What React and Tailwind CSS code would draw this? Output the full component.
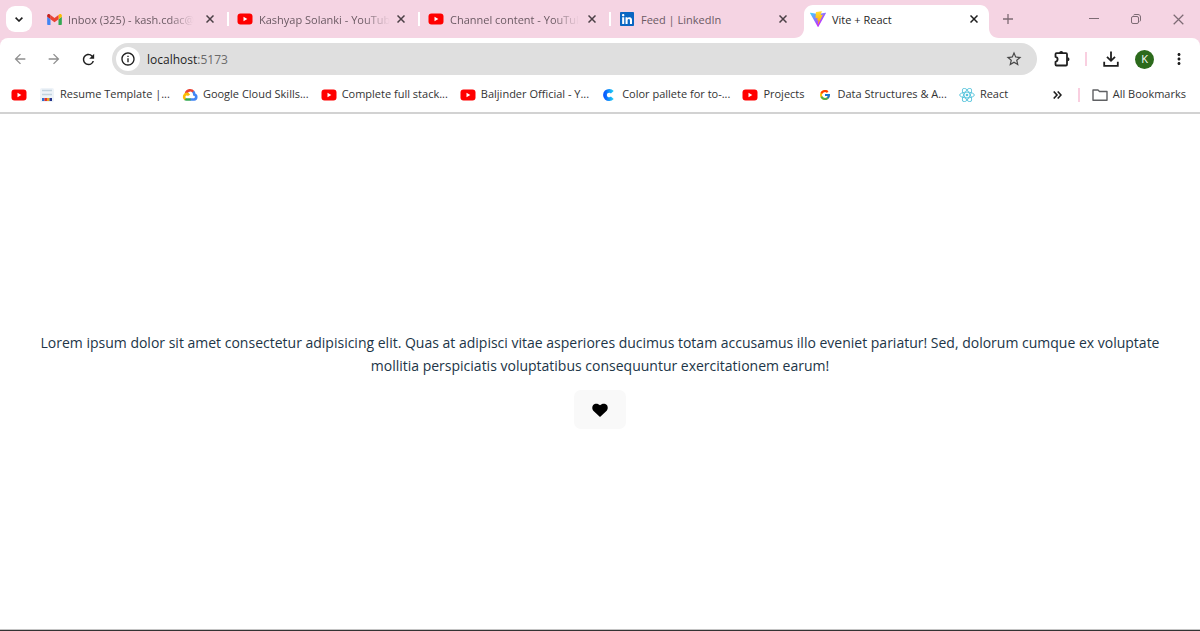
import React, { useState } from 'react';
import { FaLinkedin } from 'react-icons/fa';
import { FcGoogle } from 'react-icons/fc';
import { MdArrowBack, MdArrowForward, MdRefresh, MdOutlineInfo, MdStarBorder, MdMoreVert } from 'react-icons/md';

// --- LOGOS ---
const GmailLogo = () => (
    <svg viewBox="52 42 88 66" className="w-[15px] h-[11px]">
        <path fill="#4285f4" d="M58 108h14V74L52 59v43c0 3.3 2.7 6 6 6" />
        <path fill="#34a853" d="M120 108h14c3.300 0 6-2.700 6-6V59l-20 15" />
        <path fill="#fbbc04" d="M120 48v26l20-15v-8c0-7.400-8.500-11.600-14.400-7.200" />
        <path fill="#ea4335" d="M72 74V48l24 18 24-18v26L96 92" />
        <path fill="#c5221f" d="M52 51v8l20 15V48l-5.600-4.200c-6-4.400-14.400-.2-14.400 7.200" />
    </svg>
);

const YouTubeLogo = () => (
    <svg viewBox="0 0 16 12" className="w-4 h-3">
        <rect x="0.5" y="0.5" width="15" height="11" rx="3" fill="#ff0000" />
        <path d="M6.500 3.800v4.400L10.300 6z" fill="#fff" />
    </svg>
);

const LinkedInLogo = () => (
    <svg viewBox="0 0 16 16" className="w-4 h-4">
        <rect x="2" y="2" width="12" height="12" fill="#fff" />
        <FaLinkedin size={16} color="#0a66c2" />
    </svg>
);

const ViteLogo = () => (
    <svg viewBox="0 0 256 257" className="w-4 h-4">
        <defs>
            <linearGradient id="viteBody" x1="-.828%" x2="57.636%" y1="7.652%" y2="78.411%">
                <stop offset="0%" stopColor="#41D1FF" />
                <stop offset="100%" stopColor="#BD34FE" />
            </linearGradient>
            <linearGradient id="viteBolt" x1="43.376%" x2="50.316%" y1="2.242%" y2="89.030%">
                <stop offset="0%" stopColor="#FFEA83" />
                <stop offset="8.333%" stopColor="#FFDD35" />
                <stop offset="100%" stopColor="#FFA800" />
            </linearGradient>
        </defs>
        <path fill="url(#viteBody)" d="M255.153 37.938L134.897 252.976c-2.483 4.440-8.862 4.466-11.382.048L.875 37.958c-2.746-4.814 1.371-10.646 6.827-9.670l120.385 21.517a6.537 6.537 0 0 0 2.322-.004l117.867-21.483c5.438-.991 9.574 4.796 6.877 9.620Z" />
        <path fill="url(#viteBolt)" d="M185.432.063L96.440 17.501a3.268 3.268 0 0 0-2.634 3.014l-5.474 92.456a3.268 3.268 0 0 0 3.997 3.378l24.777-5.718c2.318-.535 4.413 1.507 3.936 3.838l-7.361 36.047c-.495 2.426 1.782 4.500 4.151 3.780l15.304-4.649c2.372-.720 4.652 1.360 4.150 3.788l-11.698 56.621c-.732 3.542 3.979 5.473 5.943 2.437l1.313-2.028l72.516-144.720c1.215-2.423-.880-5.186-3.540-4.672l-25.505 4.922c-2.396.462-4.435-1.770-3.759-4.114l16.646-57.705c.677-2.350-1.370-4.583-3.769-4.113Z" />
    </svg>
);

const ResumeLogo = () => (
    <svg viewBox="0 0 16 16" className="w-4 h-4">
        <rect x="1" y="1" width="14" height="14" rx="2" fill="#eef3f8" />
        <path d="M3 3.500h10M3 7.500h10" stroke="#c3d3de" strokeWidth="1.500" />
        <rect x="3" y="11" width="2.500" height="3" fill="#2f6fd0" />
        <rect x="5.500" y="11" width="2.500" height="3" fill="#e03131" />
        <rect x="8" y="11" width="2.500" height="3" fill="#f2a51f" />
        <rect x="10.500" y="11" width="2.500" height="3" fill="#26358c" />
    </svg>
);

const CloudLogo = () => (
    <svg viewBox="0 0 16 16" className="w-4 h-4" fill="none" strokeWidth="2.600">
        <path d="M4 6.200A4.300 4.300 0 0 1 11.500 5" stroke="#ea4335" />
        <path d="M11.200 4.600A4.300 4.300 0 0 1 12.300 7.400A2.600 2.600 0 0 1 12 12.500H8" stroke="#4285f4" />
        <path d="M8.500 12.500H4.600A3 3 0 0 1 2.600 11.800" stroke="#34a853" />
        <path d="M3.200 12.200A3 3 0 0 1 4.600 6.900A3 3 0 0 1 7 8.400" stroke="#fbbc04" />
    </svg>
);

const CoolorsLogo = () => (
    <svg viewBox="0 0 16 16" className="w-4 h-4">
        <defs>
            <linearGradient id="ring" x1="0" x2="1" y1="0" y2="0">
                <stop offset="0%" stopColor="#0a5cff" />
                <stop offset="100%" stopColor="#1cc4f5" />
            </linearGradient>
        </defs>
        <path d="M11.300 5.200A4.200 4.200 0 1 0 11.300 10.800" stroke="url(#ring)" strokeWidth="3.800" fill="none" />
    </svg>
);

const ReactLogo = () => (
    <svg viewBox="-12 -12 24 24" className="w-4 h-4" fill="none" stroke="#58c4dc" strokeWidth="1.400">
        <circle r="2" fill="#58c4dc" stroke="none" />
        <ellipse rx="11" ry="4.300" />
        <ellipse rx="11" ry="4.300" transform="rotate(60)" />
        <ellipse rx="11" ry="4.300" transform="rotate(120)" />
    </svg>
);

// --- BROWSER ICONS ---
const CrossIcon = ({ size = 8, stroke = 1.5 }) => (
    <svg width={size} height={size} viewBox="0 0 8 8" fill="none" stroke="currentColor" strokeWidth={stroke}>
        <path d="M0.500 0.500l7 7M7.500 0.500l-7 7" />
    </svg>
);

const PuzzleIcon = () => (
    <svg viewBox="0 0 18 18" className="w-[18px] h-[18px]" fill="none" stroke="#1f1f1f" strokeWidth="1.800" strokeLinejoin="round">
        <path d="M3.500 3.200H13Q14 3.200 14 4.200V14.500Q14 15.500 13 15.500H3.500Q2.500 15.500 2.500 14.500V11.800C5.300 11.300 5.300 7.400 2.500 6.900V4.200Q2.500 3.200 3.500 3.200Z" />
        <path d="M6.200 3a2 2 0 0 1 4 0zM14.500 7.300a2 2 0 0 1 0 4z" fill="#1f1f1f" stroke="none" />
    </svg>
);

const DownloadIcon = () => (
    <svg viewBox="0 0 16 16" className="w-4 h-4" fill="none" stroke="#1f1f1f" strokeWidth="1.800">
        <path d="M8 0.500V9.500M4 5.800L8 9.800l4-4M1.200 10.800V14.800H14.800V10.800" />
    </svg>
);

const FolderIcon = () => (
    <svg viewBox="0 0 16 12" className="w-4 h-3" fill="none" stroke="#5f6063" strokeWidth="1.400" strokeLinejoin="round">
        <path d="M1 1H6l1.500 1.500H15V11.200H1z" />
    </svg>
);

const tabs = [
    { title: 'Inbox (325) - kash.cdac@', icon: <GmailLogo />, fade: true, divider: true },
    { title: 'Kashyap Solanki - YouTub', icon: <YouTubeLogo />, fade: true, divider: true },
    { title: 'Channel content - YouTul', icon: <YouTubeLogo />, fade: true, divider: true },
    { title: 'Feed | LinkedIn', icon: <LinkedInLogo /> },
    { title: 'Vite + React', icon: <ViteLogo />, active: true },
];

const bookmarks = [
    { title: 'Resume Template |...', icon: <ResumeLogo /> },
    { title: 'Google Cloud Skills...', icon: <CloudLogo /> },
    { title: 'Complete full stack...', icon: <YouTubeLogo /> },
    { title: 'Baljinder Official - Y...', icon: <YouTubeLogo /> },
    { title: 'Color pallete for to-...', icon: <CoolorsLogo /> },
    { title: 'Projects', icon: <YouTubeLogo /> },
    { title: 'Data Structures & A...', icon: <FcGoogle size={12} /> },
    { title: 'React', icon: <ReactLogo /> },
];

const Tab = ({ icon, title, active, fade, divider }) => (
    <div className={`relative flex flex-1 max-w-[191px] min-w-0 items-center pl-[9px] pr-3.5 ${active ? 'text-[#1f1f1f]' : 'text-[#6b5a63]'}`}>
        {active && (
            <svg viewBox="0 0 205 33" preserveAspectRatio="none" className="absolute -left-[7px] top-[5px] w-[205px] h-[33px]">
                <path d="M0 33C6 33 10 29 10 23V9C10 4 14 0 19 0H186C191 0 195 4 195 9V23C195 29 199 33 205 33z" fill="#fff" />
            </svg>
        )}
        <span className="relative flex w-4 shrink-0 justify-center">{icon}</span>
        <span className={`relative ml-1.5 pt-0.5 whitespace-nowrap ${fade ? 'mask-r-from-80%' : ''}`}>{title}</span>
        <button aria-label="Close tab" className={`relative ml-auto ${active ? 'text-[#1f1f1f]' : 'text-[#4b4046]'}`}><CrossIcon /></button>
        {divider && <span className="absolute -right-px h-3.5 w-0.5 bg-white" />}
    </div>
);

const App = () => {
    const [liked, setLiked] = useState(false);

    return (
        <div className="flex min-h-screen w-full flex-col border-b border-[#333333] bg-[#f5d4e3] font-['Open_Sans','Noto_Sans',sans-serif] text-[11px]">

            {/* --- TAB STRIP --- */}
            <header className="flex h-[38px] pl-1.5">
                <button aria-label="Search tabs" className="mt-1.5 mr-[5px] flex h-[26px] w-[26px] items-center justify-center rounded-[9px] bg-white">
                    <svg viewBox="0 0 8 5" className="w-2 h-[5px]" fill="none" stroke="#1f1f1f" strokeWidth="1.600"><path d="M0.600 0.600L4 4L7.400 0.600" /></svg>
                </button>
                {tabs.map((t) => <Tab key={t.title} {...t} />)}
                <button aria-label="New tab" className="ml-[11px] text-[#7d6b74]">
                    <svg viewBox="0 0 10 10" className="w-2.5 h-2.5" stroke="currentColor" strokeWidth="1.300"><path d="M5 0v10M0 5h10" /></svg>
                </button>
                <div className="ml-auto flex items-center gap-8 pr-4 text-[#7d6b74]">
                    <button aria-label="Minimize">
                        <svg viewBox="0 0 10 10" className="w-2.5 h-2.5" stroke="currentColor"><path d="M0 4.500h10" /></svg>
                    </button>
                    <button aria-label="Restore">
                        <svg viewBox="0 0 10 10" className="w-2.5 h-2.5" fill="none" stroke="currentColor">
                            <rect x="0.500" y="2.500" width="7" height="7" rx="1.500" />
                            <path d="M2.500 1.200C2.800 0.700 3.300 0.500 4 0.500H7C8.500 0.500 9.500 1.500 9.500 3V6C9.500 6.700 9.300 7.200 8.800 7.500" />
                        </svg>
                    </button>
                    <button aria-label="Close window"><CrossIcon size={11} stroke={0.9} /></button>
                </div>
            </header>

            {/* --- TOOLBAR --- */}
            <div className="rounded-t-lg border-b-2 border-[#d2d2d2] bg-white">
                <div className="flex items-center pt-[5px] pr-3">
                    <nav className="flex w-28 items-center gap-[18px] pl-3">
                        <button aria-label="Back" className="text-[#8f8f8f]"><MdArrowBack size={16} /></button>
                        <button aria-label="Forward" className="text-[#8f8f8f]"><MdArrowForward size={16} /></button>
                        <button aria-label="Reload" className="text-[#1f1f1f]"><MdRefresh size={17} /></button>
                    </nav>
                    <div className="flex h-8 flex-1 items-center rounded-full bg-[#dfdfdf] pl-1 pr-3.5">
                        <button aria-label="View site information" className="flex h-6 w-6 items-center justify-center rounded-full bg-white text-[#1f1f1f]">
                            <MdOutlineInfo size={16} />
                        </button>
                        <p className="ml-[7px] flex-1 pt-0.5 text-xs text-[#1f1f1f]">localhost<span className="text-[#6a6a6a]">:5173</span></p>
                        <button aria-label="Bookmark this tab" className="text-[#474747]"><MdStarBorder size={18} /></button>
                    </div>
                    <div className="flex items-center pl-4">
                        <button aria-label="Extensions"><PuzzleIcon /></button>
                        <span className="ml-3.5 h-3.5 w-0.5 bg-[#f9cfe0]" />
                        <button aria-label="Downloads" className="ml-4"><DownloadIcon /></button>
                        <button aria-label="Profile" className="ml-4 h-[19px] w-[19px] rounded-full bg-[#2c6a1c] text-white">K</button>
                        <button aria-label="Menu" className="ml-4 text-[#1f1f1f]"><MdMoreVert size={18} /></button>
                    </div>
                </div>

                {/* --- BOOKMARKS --- */}
                <div className="flex h-[37px] items-center gap-3 pt-0.5 pl-[11px] pr-3.5 whitespace-nowrap text-[#333333]">
                    <a href="#youtube" aria-label="YouTube"><YouTubeLogo /></a>
                    {bookmarks.map((b) => (
                        <a key={b.title} href="#bookmark" className="flex items-center gap-[5px]">
                            <span className="flex w-4 justify-center">{b.icon}</span>
                            {b.title}
                        </a>
                    ))}
                    <button aria-label="More bookmarks" className="ml-auto">
                        <svg viewBox="0 0 9 8" className="w-[9px] h-2" fill="none" stroke="#1f1f1f" strokeWidth="1.600"><path d="M0.700 0.500L4 4L0.700 7.500M4.700 0.500L8 4L4.700 7.500" /></svg>
                    </button>
                    <span className="ml-1 h-3.5 w-0.5 bg-[#f9cfe0]" />
                    <a href="#all" className="flex items-center gap-[5px]"><FolderIcon />All Bookmarks</a>
                </div>
            </div>

            {/* --- PAGE --- */}
            <main className="flex flex-1 flex-col items-center justify-center border-b border-[#c4c4c4] bg-white px-8 pt-[17px] text-center">
                <p className="text-sm leading-[23px] text-[#213547]">
                    Lorem ipsum dolor sit amet consectetur adipisicing elit. Quas at adipisci vitae asperiores ducimus totam accusamus illo eveniet pariatur! Sed, dolorum cumque ex voluptate mollitia perspiciatis voluptatibus consequuntur exercitationem earum!
                </p>
                <button
                    aria-label="Like"
                    aria-pressed={liked}
                    onClick={() => setLiked(!liked)}
                    className="mt-[13px] flex h-[39px] w-[52px] items-center justify-center rounded-[7px] bg-[#f9f9f9]"
                >
                    <svg viewBox="0 0 16 14" className="w-4 h-3.5" fill={liked ? '#e11d48' : '#000'}>
                        <path d="M8 14L1.300 7.800C-0.100 6.400 0 3.300 1.200 2C2.800 0.200 6.200 0.200 8 2.300C9.800 0.200 13.200 0.200 14.800 2C16 3.300 16.100 6.400 14.700 7.800z" />
                    </svg>
                </button>
            </main>
        </div>
    );
};

export default App;
